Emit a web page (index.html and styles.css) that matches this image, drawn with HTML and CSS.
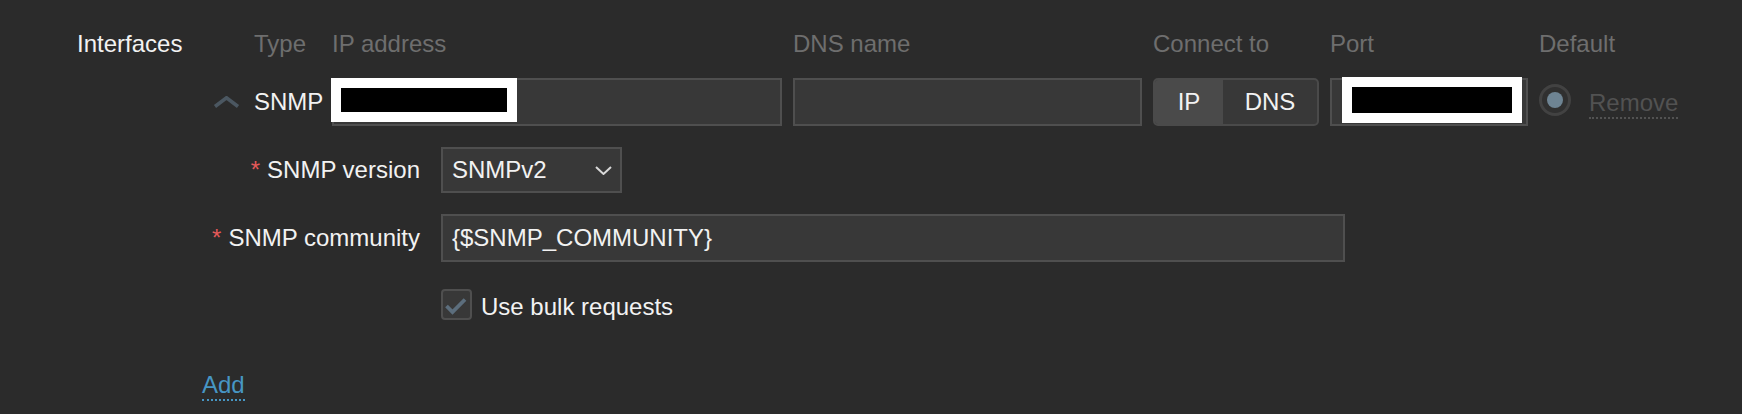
FILE: index.html
```html
<!DOCTYPE html>
<html>
<head>
<meta charset="utf-8">
<link rel="stylesheet" href="styles.css">
</head>
<body>
<div class="form">
  <div class="form-label">Interfaces</div>
  <div class="form-field">
    <div class="iface-grid iface-head">
      <div></div>
      <div>Type</div>
      <div>IP address</div>
      <div>DNS name</div>
      <div>Connect to</div>
      <div>Port</div>
      <div>Default</div>
      <div></div>
    </div>
    <div class="iface-grid iface-row">
      <div class="toggle">
        <svg width="27" height="12" viewBox="0 0 27 12"><polyline points="2,10.5 13.5,1.8 25,10.5" fill="none" stroke="#4b5761" stroke-width="3.6"/></svg>
      </div>
      <div class="type">SNMP</div>
      <div class="masked">
        <input class="input" type="text">
        <span class="redact redact-ip"></span>
      </div>
      <input class="input" type="text">
      <div class="seg">
        <span class="seg-btn active">IP</span>
        <span class="seg-btn">DNS</span>
      </div>
      <div class="masked">
        <input class="input" type="text">
        <span class="redact redact-port"></span>
      </div>
      <div class="radio-cell"><span class="radio"><span class="radio-dot"></span></span></div>
      <div class="remove-cell"><span class="link link-disabled">Remove</span></div>
    </div>
    <div class="subform">
      <div class="sub-label required">SNMP version</div>
      <div class="select">
        <span>SNMPv2</span>
        <svg width="17" height="9" viewBox="0 0 17 9"><polyline points="1,1 8.5,8 16,1" fill="none" stroke="#d8d8d8" stroke-width="2"/></svg>
      </div>
      <div class="sub-label required">SNMP community</div>
      <input class="input wide" type="text" value="{$SNMP_COMMUNITY}">
      <div></div>
      <label class="check-row">
        <span class="checkbox">
          <svg width="27" height="27" viewBox="0 0 27 27"><polyline points="3.5,15 9.5,21 22,8.5" fill="none" stroke="#5c6e7d" stroke-width="3.8"/></svg>
        </span>
        <span class="check-text">Use bulk requests</span>
      </label>
    </div>
    <div class="add-row"><a class="link add-link">Add</a></div>
  </div>
</div>
</body>
</html>
```
FILE: styles.css
```css
* { box-sizing: border-box; }

html, body {
  margin: 0;
  background: #2b2b2b;
}

body {
  font-family: "Liberation Sans", Arial, sans-serif;
  font-size: 24px;
  color: #f2f2f2;
  width: 1742px;
  height: 414px;
  overflow: hidden;
}

.form {
  display: grid;
  grid-template-columns: 125px 1fr;
  padding: 28px 0 0 77px;
}

.form-label {
  line-height: 30px;
  padding-top: 1px;
  white-space: nowrap;
}

.iface-grid {
  display: grid;
  grid-template-columns: 41px 67px 450px 349px 166px 198px 39px auto;
  column-gap: 11px;
}

.iface-head {
  line-height: 30px;
  padding-top: 1px;
  color: #6e6e6e;
  white-space: nowrap;
}

.iface-row {
  margin-top: 19px;
  height: 48px;
  align-items: center;
  line-height: 30px;
}

.toggle {
  display: flex;
  align-items: center;
  padding-left: 11px;
}

.toggle svg { display: block; }

.type { white-space: nowrap; }

.input {
  display: block;
  width: 100%;
  height: 48px;
  margin: 0;
  background: #383838;
  border: 2px solid #4f4f4f;
  border-radius: 0;
  color: #f2f2f2;
  font: inherit;
  padding: 0 9px;
  outline: none;
}

.masked {
  position: relative;
  height: 48px;
}

.redact {
  position: absolute;
  top: 0;
  background: #000;
  border: 10px solid #fff;
}

.redact-ip {
  left: -1px;
  width: 186px;
  height: 44px;
}

.redact-port {
  left: 12px;
  top: -1px;
  width: 180px;
  height: 46px;
}

.seg {
  display: flex;
  height: 48px;
  border: 2px solid #4a4a4a;
  border-radius: 5px;
  overflow: hidden;
  background: #383838;
}

.seg-btn {
  display: flex;
  align-items: center;
  justify-content: center;
  flex: 1;
}

.seg-btn.active {
  flex: 0 0 68px;
  background: #4a4a4a;
}

.radio-cell {
  align-self: start;
  margin-top: 6px;
}

.radio {
  display: flex;
  align-items: center;
  justify-content: center;
  width: 32px;
  height: 32px;
  border-radius: 50%;
  border: 3px solid #424242;
  background: #303030;
}

.radio-dot {
  width: 16px;
  height: 16px;
  border-radius: 50%;
  background: #6e8493;
}

.remove-cell {
  align-self: start;
  margin-top: 10px;
}

.link {
  display: inline-block;
  line-height: 24px;
  padding-bottom: 2px;
  border-bottom: 2px dotted;
  text-decoration: none;
}

.link-disabled {
  color: #525252;
  border-bottom-color: #525252;
}

.subform {
  display: grid;
  grid-template-columns: 218px auto;
  column-gap: 21px;
  row-gap: 21px;
  margin-top: 21px;
  align-items: center;
  justify-items: start;
}

.sub-label {
  justify-self: end;
  white-space: nowrap;
  line-height: 30px;
}

.required::before {
  content: "*";
  color: #e45959;
  margin-right: 7px;
}

.select {
  display: flex;
  align-items: center;
  justify-content: space-between;
  width: 181px;
  height: 46px;
  background: #383838;
  border: 2px solid #4f4f4f;
  padding: 0 8px 0 9px;
}

.select svg { display: block; }

.wide { width: 904px; }

.check-row {
  display: flex;
  align-items: center;
  gap: 9px;
  margin-top: 6px;
  line-height: 30px;
}

.check-text {
  position: relative;
  top: 2px;
}

.checkbox {
  display: flex;
  align-items: center;
  justify-content: center;
  width: 31px;
  height: 31px;
  background: #383838;
  border: 2px solid #4f4f4f;
  border-radius: 4px;
}

.checkbox svg { display: block; }

.add-row {
  display: flex;
  margin-top: 53px;
}

.add-link {
  color: #4796c4;
  border-bottom-color: #4796c4;
}
```
